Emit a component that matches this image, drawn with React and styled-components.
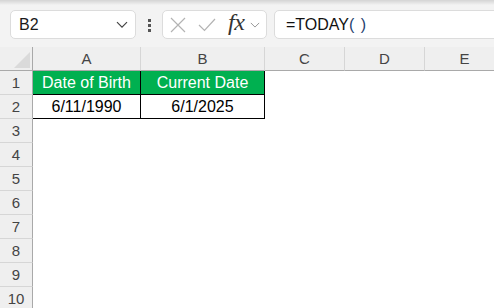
import React from 'react';
import styled, { createGlobalStyle } from 'styled-components';

const GlobalStyle = createGlobalStyle`
	html, body {
		margin: 0;
		padding: 0;
		background: #fff;
		font-family: 'Liberation Sans', Arial, sans-serif;
		overflow: hidden;
	}
`;

const Page = styled.div`
	width: 494px;
	height: 308px;
	overflow: hidden;
	background: #fff;
`;

const Toolbar = styled.div`
	display: flex;
	align-items: flex-start;
	height: 47px;
	box-sizing: border-box;
	padding: 10px 0 0 10px;
	background: linear-gradient(#d4d4d4 0, #e6e6e6 3px, #f3f3f3 5px);
	overflow: hidden;
`;

const Box = styled.div`
	display: flex;
	align-items: center;
	flex-shrink: 0;
	box-sizing: border-box;
	height: 29px;
	width: ${p => p.$w}px;
	margin-left: ${p => p.$ml || 0}px;
	background: #fff;
	border: 1px solid #dcdcdc;
	border-radius: 5px;
	font-size: 16px;
	color: #1a1a1a;
`;

const NameText = styled.span`
	flex: 1;
	padding-left: 8px;
`;

const Dots = styled.div`
	display: flex;
	flex-direction: column;
	gap: 2px;
	margin: 9px 0 0 12px;
	& span {
		width: 3px;
		height: 3px;
		background: #555;
	}
`;

const Fx = styled.span`
	font-family: 'Liberation Serif', 'Times New Roman', serif;
	font-style: italic;
	font-size: 24px;
	color: #333;
	margin: -4px 6px 0 12px;
	letter-spacing: -0.5px;
`;

const Formula = styled.span`
	padding-left: 11px;
	color: #111;
	& b {
		font-weight: normal;
		color: #1f3f6e;
		letter-spacing: 1px;
	}
`;

const Sheet = styled.div`
	display: grid;
	grid-template-columns: 33px 108px 124px 80px 80px 80px;
	grid-auto-rows: 24px;
	font-size: 16px;
`;

const Corner = styled.div`
	position: relative;
	background: #efefef;
	border-right: 1px solid #a9a9a9;
	border-bottom: 1px solid #a9a9a9;
	&::after {
		content: '';
		position: absolute;
		right: 2px;
		bottom: 2px;
		border-style: solid;
		border-width: 0 0 16px 16px;
		border-color: transparent transparent #dadada transparent;
	}
`;

const ColHead = styled.div`
	display: flex;
	align-items: center;
	justify-content: center;
	background: #efefef;
	color: #444;
	font-size: 15px;
	border-right: 1px solid #d6d6d6;
	border-bottom: 1px solid #a9a9a9;
`;

const RowHead = styled.div`
	display: flex;
	align-items: center;
	justify-content: center;
	background: #efefef;
	color: #444;
	font-size: 15px;
	border-right: 1px solid #a9a9a9;
	border-bottom: 1px solid #d6d6d6;
`;

const Cell = styled.div`
	display: flex;
	align-items: center;
	justify-content: center;
	background: ${p => (p.$head ? '#00b050' : '#fff')};
	color: ${p => (p.$head ? '#fff' : '#000')};
	border-right: 1px solid ${p => (p.$table ? '#000' : 'transparent')};
	border-bottom: 1px solid ${p => (p.$table ? '#000' : 'transparent')};
	white-space: nowrap;
`;

const Chevron = ({ size = 12, color = '#444', mr = 6 }) => (
	<svg width={size} height={size * 0.6} viewBox="0 0 12 7" style={{ marginRight: mr }}>
		<path d="M1 1 L6 6 L11 1" fill="none" stroke={color} strokeWidth="1.2" />
	</svg>
);

const columns = ['A', 'B', 'C', 'D', 'E'];
const data = [
	['Date of Birth', 'Current Date'],
	['6/11/1990', '6/1/2025'],
];

export default function App() {
	const rows = [];
	for (let r = 1; r <= 10; r++) {
		rows.push(<RowHead key={'h' + r}>{r}</RowHead>);
		columns.forEach((c, i) => {
			const inTable = r <= 2 && i < 2;
			rows.push(
				<Cell key={c + r} $table={inTable} $head={inTable && r === 1}>
					{inTable ? data[r - 1][i] : ''}
				</Cell>
			);
		});
	}

	return (
		<Page>
			<GlobalStyle />
			<Toolbar>
				<Box $w={126}>
					<NameText>B2</NameText>
					<Chevron color="#444" mr={7} />
				</Box>
				<Dots>
					<span />
					<span />
					<span />
				</Dots>
				<Box $w={105} $ml={11}>
					<svg width="16" height="16" viewBox="0 0 16 16" style={{ marginLeft: 7 }}>
						<path d="M1 1 L15 15 M15 1 L1 15" stroke="#b3b3b3" strokeWidth="1.2" fill="none" />
					</svg>
					<svg width="18" height="14" viewBox="0 0 18 14" style={{ marginLeft: 12 }}>
						<path d="M1 7 L6.5 12.5 L17 1" stroke="#b3b3b3" strokeWidth="1.2" fill="none" />
					</svg>
					<Fx>fx</Fx>
					<Chevron size={10} color="#999" mr={0} />
				</Box>
				<Box $w={260} $ml={7}>
					<Formula>
						=TODAY<b>( )</b>
					</Formula>
				</Box>
			</Toolbar>
			<Sheet>
				<Corner />
				{columns.map(c => (
					<ColHead key={c}>{c}</ColHead>
				))}
				{rows}
			</Sheet>
		</Page>
	);
}
